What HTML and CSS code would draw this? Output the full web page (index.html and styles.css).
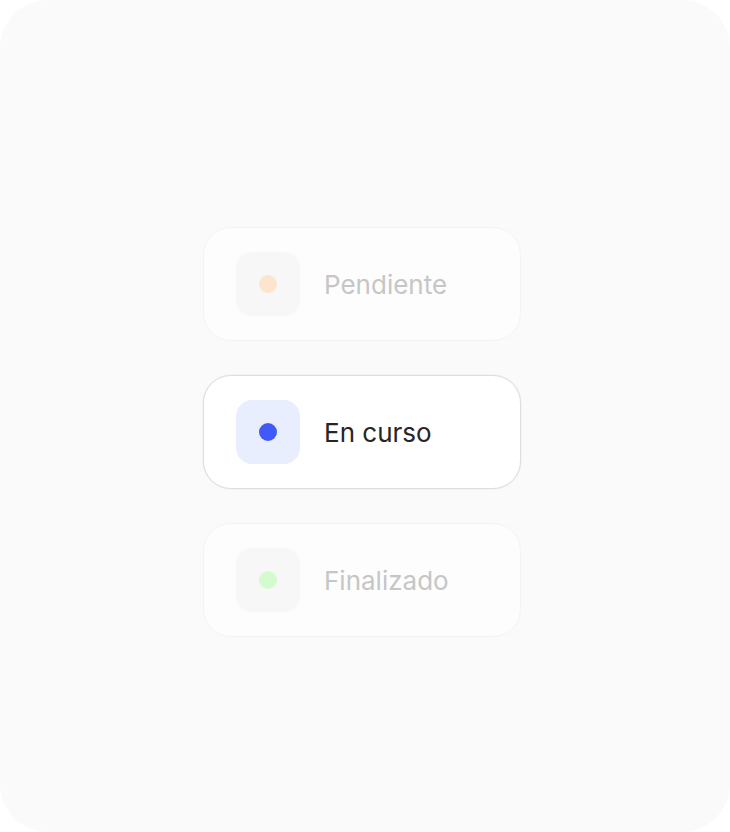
FILE: index.html
```html
<!DOCTYPE html>
<html lang="es">
<head>
  <meta charset="UTF-8">
  <meta name="viewport" content="width=device-width, initial-scale=1.0">
  <title>Estados</title>
  <link rel="stylesheet" href="styles.css">
</head>
<body>
  <div class="frame">
    <div class="status-list">
      <!-- Pendiente -->
      <div class="status-card muted">
        <div class="status-icon"><span class="dot dot-pending"></span></div>
        <span class="status-label">Pendiente</span>
      </div>

      <!-- En curso (activo) -->
      <div class="status-card active">
        <div class="status-icon"><span class="dot dot-progress"></span></div>
        <span class="status-label">En curso</span>
      </div>

      <!-- Finalizado -->
      <div class="status-card muted">
        <div class="status-icon"><span class="dot dot-done"></span></div>
        <span class="status-label">Finalizado</span>
      </div>
    </div>
  </div>
</body>
</html>
```

FILE: styles.css
```css
html, body {
  margin: 0;
  height: 100%;
  background-color: #ffffff;
  font-family: Inter, "Noto Sans", sans-serif;
}

/* Outer rounded panel */
.frame {
  width: 730px;
  height: 832px;
  border-radius: 48px;
  background-color: #fafafa;
  display: flex;
  justify-content: center;
  align-items: center;
}

.status-list {
  display: flex;
  flex-direction: column;
  gap: 34px;
  margin: 32px 6px 0 0;
}

.status-card {
  width: 252px;
  padding: 24px 32px;
  display: flex;
  align-items: center;
  gap: 24px;
  border-radius: 28px;
  border: 1px solid #f3f3f3;
  background-color: #fdfdfd;
}

.status-card.active {
  border: 1px solid #dedede;
  background-color: #ffffff;
  box-shadow: 0 0 0 0.5px #ececec;
}

.status-icon {
  width: 64px;
  height: 64px;
  border-radius: 16px;
  background-color: #f7f7f7;
  display: flex;
  justify-content: center;
  align-items: center;
}

.active .status-icon {
  background-color: #e9eefe;
}

.dot {
  width: 18px;
  height: 18px;
  border-radius: 50%;
}

.dot-pending { background-color: #fde4cc; }
.dot-progress { background-color: #4159f6; }
.dot-done { background-color: #d3fbcf; }

.status-label {
  font-size: 26px;
  color: #c6c6c6;
}

.active .status-label {
  color: #262626;
}
```
